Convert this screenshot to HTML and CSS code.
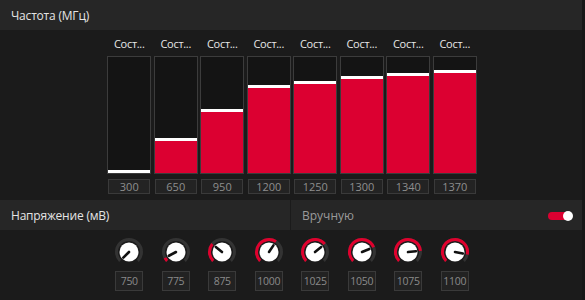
FILE: index.html
```html
<!DOCTYPE html>
<html lang="ru">
<head>
<meta charset="utf-8">
<link rel="stylesheet" href="styles.css">
</head>
<body>
<div class="page">
  <div class="hdr"><span class="title">Частота (МГц)</span></div>
  <div class="freq">
    <div class="col"><div class="lbl">Сост...</div><div class="bar"><div class="fill" style="height:3px"></div></div><div class="val">300</div></div>
    <div class="col"><div class="lbl">Сост...</div><div class="bar"><div class="fill" style="height:35px"></div></div><div class="val">650</div></div>
    <div class="col"><div class="lbl">Сост...</div><div class="bar"><div class="fill" style="height:64px"></div></div><div class="val">950</div></div>
    <div class="col"><div class="lbl">Сост...</div><div class="bar"><div class="fill" style="height:88px"></div></div><div class="val">1200</div></div>
    <div class="col"><div class="lbl">Сост...</div><div class="bar"><div class="fill" style="height:92px"></div></div><div class="val">1250</div></div>
    <div class="col"><div class="lbl">Сост...</div><div class="bar"><div class="fill" style="height:97px"></div></div><div class="val">1300</div></div>
    <div class="col"><div class="lbl">Сост...</div><div class="bar"><div class="fill" style="height:100px"></div></div><div class="val">1340</div></div>
    <div class="col"><div class="lbl">Сост...</div><div class="bar"><div class="fill" style="height:103px"></div></div><div class="val">1370</div></div>
  </div>
  <div class="row2">
    <div class="panel left"><span class="title">Напряжение (мВ)</span></div>
    <div class="panel right"><span class="manual">Вручную</span><span class="toggle"><span class="thumb"></span></span></div>
  </div>
  <div class="volt">
    <div class="kcol">
      <svg class="knob" viewBox="0 0 30 30"><path class="track" d="M6.16 23.84A12.5 12.5 0 1 1 23.84 23.84"/><circle class="face" cx="15" cy="15" r="9.5"/><line class="ptr" x1="15" y1="15" x2="9.34" y2="20.66"/></svg>
      <div class="kval">750</div>
    </div>
    <div class="kcol">
      <svg class="knob" viewBox="0 0 30 30"><path class="track" d="M6.16 23.84A12.5 12.5 0 1 1 23.84 23.84"/><path class="arc" d="M6.16 23.84A12.5 12.5 0 0 1 3.97 20.89"/><circle class="face" cx="15" cy="15" r="9.5"/><line class="ptr" x1="15" y1="15" x2="7.94" y2="18.77"/></svg>
      <div class="kval">775</div>
    </div>
    <div class="kcol">
      <svg class="knob" viewBox="0 0 30 30"><path class="track" d="M6.16 23.84A12.5 12.5 0 1 1 23.84 23.84"/><path class="arc" d="M6.16 23.84A12.5 12.5 0 0 1 5.34 7.06"/><circle class="face" cx="15" cy="15" r="9.5"/><line class="ptr" x1="15" y1="15" x2="8.82" y2="9.92"/></svg>
      <div class="kval">875</div>
    </div>
    <div class="kcol">
      <svg class="knob" viewBox="0 0 30 30"><path class="track" d="M6.16 23.84A12.5 12.5 0 1 1 23.84 23.84"/><path class="arc" d="M6.16 23.84A12.5 12.5 0 0 1 21.94 4.61"/><circle class="face" cx="15" cy="15" r="9.5"/><line class="ptr" x1="15" y1="15" x2="19.44" y2="8.35"/></svg>
      <div class="kval">1000</div>
    </div>
    <div class="kcol">
      <svg class="knob" viewBox="0 0 30 30"><path class="track" d="M6.16 23.84A12.5 12.5 0 1 1 23.84 23.84"/><path class="arc" d="M6.16 23.84A12.5 12.5 0 1 1 24.66 7.06"/><circle class="face" cx="15" cy="15" r="9.5"/><line class="ptr" x1="15" y1="15" x2="21.18" y2="9.92"/></svg>
      <div class="kval">1025</div>
    </div>
    <div class="kcol">
      <svg class="knob" viewBox="0 0 30 30"><path class="track" d="M6.16 23.84A12.5 12.5 0 1 1 23.84 23.84"/><path class="arc" d="M6.16 23.84A12.5 12.5 0 1 1 26.55 10.22"/><circle class="face" cx="15" cy="15" r="9.5"/><line class="ptr" x1="15" y1="15" x2="22.39" y2="11.94"/></svg>
      <div class="kval">1050</div>
    </div>
    <div class="kcol">
      <svg class="knob" viewBox="0 0 30 30"><path class="track" d="M6.16 23.84A12.5 12.5 0 1 1 23.84 23.84"/><path class="arc" d="M6.16 23.84A12.5 12.5 0 1 1 27.44 13.78"/><circle class="face" cx="15" cy="15" r="9.5"/><line class="ptr" x1="15" y1="15" x2="22.96" y2="14.22"/></svg>
      <div class="kval">1075</div>
    </div>
    <div class="kcol">
      <svg class="knob" viewBox="0 0 30 30"><path class="track" d="M6.16 23.84A12.5 12.5 0 1 1 23.84 23.84"/><path class="arc" d="M6.16 23.84A12.5 12.5 0 1 1 27.26 17.44"/><circle class="face" cx="15" cy="15" r="9.5"/><line class="ptr" x1="15" y1="15" x2="22.85" y2="16.56"/></svg>
      <div class="kval">1100</div>
    </div>
  </div>
</div>
</body>
</html>
```
FILE: styles.css
```css
* { box-sizing: border-box; }
html, body { margin: 0; padding: 0; }
body {
  background: #171717;
  font-family: "Open Sans", "Noto Sans", sans-serif;
  width: 585px;
  height: 300px;
  overflow: hidden;
}
.page {
  width: 582px;
  height: 300px;
  background: #1b1b1b;
}
.hdr {
  height: 30px;
  background: #262626;
  display: flex;
  align-items: center;
  padding-left: 11px;
}
.title {
  font-size: 12px;
  color: #e4e4e4;
  letter-spacing: -0.2px;
}
.freq {
  display: grid;
  grid-template-columns: repeat(8, 46.5px);
  padding-left: 106px;
  padding-top: 7px;
}
.col {
  display: flex;
  flex-direction: column;
  align-items: center;
}
.lbl {
  height: 14px;
  line-height: 14px;
  font-size: 11px;
  color: #e8e8e8;
  letter-spacing: -0.3px;
}
.bar {
  margin-top: 5px;
  width: 44px;
  height: 118px;
  border: 1px solid #3c3c3c;
  background: #141414;
  display: flex;
  flex-direction: column;
  justify-content: flex-end;
}
.fill {
  background: #dc0031;
  border-top: 3px solid #ffffff;
}
.val {
  margin-top: 5px;
  width: 42px;
  height: 15px;
  border: 1px solid #3a3a3a;
  background: #232323;
  color: #8e8e8e;
  font-size: 11px;
  line-height: 13px;
  text-align: center;
}
.row2 {
  margin-top: 6px;
  height: 30px;
  display: flex;
  gap: 1px;
}
.panel {
  background: #262626;
  display: flex;
  align-items: center;
}
.left {
  width: 290px;
  padding-left: 11px;
}
.right {
  flex: 1;
  padding-left: 11px;
  padding-right: 10px;
  justify-content: space-between;
}
.manual {
  font-size: 12px;
  color: #9a9a9a;
}
.toggle {
  position: relative;
  width: 24px;
  height: 8px;
  border-radius: 4px;
  background: #dc0031;
  margin-top: 1px;
}
.thumb {
  position: absolute;
  right: -1px;
  top: -1px;
  width: 10px;
  height: 10px;
  border-radius: 50%;
  background: #ffffff;
}
.volt {
  display: grid;
  grid-template-columns: repeat(8, 46.5px);
  padding-left: 106px;
  padding-top: 7px;
}
.kcol {
  display: flex;
  flex-direction: column;
  align-items: center;
}
.knob {
  width: 30px;
  height: 30px;
  display: block;
}
.track {
  fill: none;
  stroke: #333333;
  stroke-width: 3;
}
.arc {
  fill: none;
  stroke: #e0002d;
  stroke-width: 3;
}
.face { fill: #ffffff; }
.ptr {
  stroke: #111111;
  stroke-width: 2.6;
  stroke-linecap: round;
}
.kval {
  margin-top: 4px;
  width: 28px;
  height: 20px;
  border: 1px solid #3a3a3a;
  background: #222222;
  color: #8a8a8a;
  font-size: 10.5px;
  line-height: 18px;
  text-align: center;
  letter-spacing: -0.3px;
}
```
